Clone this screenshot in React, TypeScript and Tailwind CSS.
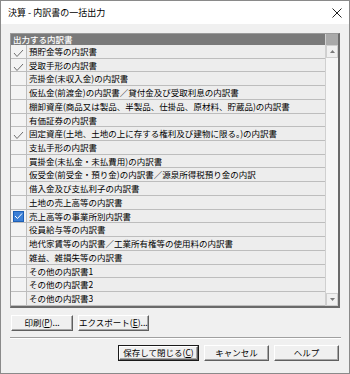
import React from "react";

const rows: { t: string; c?: "gray" | "blue" }[] = [
  { t: "預貯金等の内訳書", c: "gray" },
  { t: "受取手形の内訳書", c: "gray" },
  { t: "売掛金(未収入金)の内訳書" },
  { t: "仮払金(前渡金)の内訳書／貸付金及び受取利息の内訳書" },
  { t: "棚卸資産(商品又は製品、半製品、仕掛品、原材料、貯蔵品)の内訳書" },
  { t: "有価証券の内訳書" },
  { t: "固定資産(土地、土地の上に存する権利及び建物に限る。)の内訳書", c: "gray" },
  { t: "支払手形の内訳書" },
  { t: "買掛金(未払金・未払費用)の内訳書" },
  { t: "仮受金(前受金・預り金)の内訳書／源泉所得税預り金の内訳" },
  { t: "借入金及び支払利子の内訳書" },
  { t: "土地の売上高等の内訳書" },
  { t: "売上高等の事業所別内訳書", c: "blue" },
  { t: "役員給与等の内訳書" },
  { t: "地代家賃等の内訳書／工業所有権等の使用料の内訳書" },
  { t: "雑益、雑損失等の内訳書" },
  { t: "その他の内訳書1" },
  { t: "その他の内訳書2" },
  { t: "その他の内訳書3" },
];

function GrayCheck() {
  return (
    <svg width="11" height="9" viewBox="0 0 11 9" className="mt-[4px]">
      <polyline points="1,4 4,7.5 10,1" fill="none" stroke="#6e6e6e" strokeWidth="1" />
    </svg>
  );
}

function BlueCheck() {
  return (
    <div className="w-[11px] h-[11px] bg-[#3b7fd6] border border-[#1d5fb5] flex items-center justify-center">
      <svg width="9" height="8" viewBox="0 0 9 8">
        <polyline points="1,4 3.5,6.5 8,1.5" fill="none" stroke="#ffffff" strokeWidth="1" />
      </svg>
    </div>
  );
}

function Btn({ children, w, def }: { children: React.ReactNode; w: string; def?: boolean }) {
  return (
    <div className={`${w} h-[16px] ${def ? "border border-[#1a1a1a]" : ""} flex`}>
      <div className="flex-1 bg-[#f0f0f0] border border-t-white border-l-white border-r-[#5f5f5f] border-b-[#5f5f5f] shadow-[inset_-1px_-1px_0_#a8a8a8] flex items-center justify-center text-[8.5px] leading-none whitespace-nowrap">
        {children}
      </div>
    </div>
  );
}

export default function App() {
  return (
    <div className="w-[350px] h-[374px] bg-[#f0f0f0] border border-[#8a8a8a] flex flex-col text-black font-['Noto_Sans_CJK_JP','Noto_Sans',sans-serif]">
      <div className="h-[23px] bg-white flex items-center justify-between pl-[7px] pr-[7px] shrink-0">
        <span className="text-[9px] leading-none">決算 - 内訳書の一括出力</span>
        <svg width="10" height="10" viewBox="0 0 10 10">
          <path d="M0.5 0.5 L9.5 9.5 M9.5 0.5 L0.5 9.5" stroke="#222" strokeWidth="1" />
        </svg>
      </div>
      <div className="flex flex-col pl-[9px] pr-[9px] pt-[9px]">
        <div className="flex w-[330px] border-t border-l border-[#9a9a9a] border-r-2 border-b-2 border-r-[#6a6a6a] border-b-[#6a6a6a]">
          <div className="flex flex-col flex-1">
            <div className="h-[11px] bg-[#7a7a7a] text-white text-[8.5px] font-medium leading-[11px] pl-[2px]">出力する内訳書</div>
            {rows.map((r, i) => (
              <div key={i} className="h-[13.72px] flex border-b border-[#bdbdbd] bg-[#ededed]">
                <div className="w-[16px] shrink-0 border-r border-[#bdbdbd] bg-[#f3f3f3] flex items-start justify-center">
                  {r.c === "gray" && <GrayCheck />}
                  {r.c === "blue" && (
                    <div className="mt-[1px]">
                      <BlueCheck />
                    </div>
                  )}
                </div>
                <div className="pl-[2px] text-[8.5px] leading-[13px] whitespace-nowrap overflow-hidden">{r.t}</div>
              </div>
            ))}
          </div>
          <div className="w-[13px] flex flex-col border-l border-[#d0d0d0]">
            <div className="h-[11px] bg-[#a9a9a9]" />
            <div className="h-[13px] bg-[#f0f0f0] border border-[#cfcfcf] flex items-center justify-center">
              <svg width="5" height="3" viewBox="0 0 5 3">
                <polygon points="0,3 2.5,0 5,3" fill="#7a7a7a" />
              </svg>
            </div>
            <div className="flex-1 bg-[#f6f6f6]" />
            <div className="h-[13px] bg-[#f0f0f0] border border-[#cfcfcf] flex items-center justify-center">
              <svg width="5" height="3" viewBox="0 0 5 3">
                <polygon points="0,0 2.5,3 5,0" fill="#7a7a7a" />
              </svg>
            </div>
          </div>
        </div>
        <div className="flex gap-[5px] mt-[7px] pl-[1px]">
          <Btn w="w-[62px]">
            印刷(<span className="underline">P</span>)...
          </Btn>
          <Btn w="w-[64px]">
            エクスポート(<span className="underline">E</span>)...
          </Btn>
        </div>
        <div className="mt-[6px] h-[2px] border-t border-[#a0a0a0] border-b border-b-white w-[331px]" />
        <div className="flex justify-end gap-[5px] mt-[6px] pr-[1px]">
          <Btn w="w-[81px]" def>
            保存して閉じる(<span className="underline">C</span>)
          </Btn>
          <Btn w="w-[65px]">キャンセル</Btn>
          <Btn w="w-[65px]">ヘルプ</Btn>
        </div>
      </div>
    </div>
  );
}
